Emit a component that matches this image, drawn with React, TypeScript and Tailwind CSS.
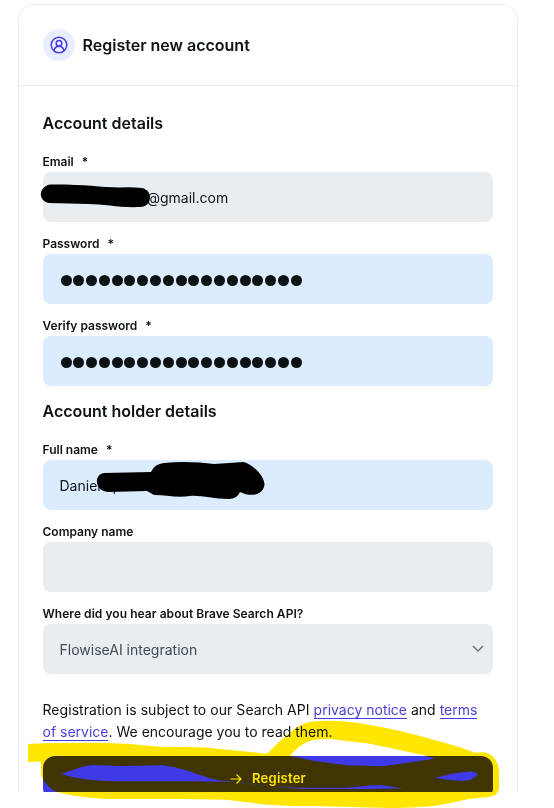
import type { ReactNode } from "react";

function Field({ label, required, tone, children }: { label: ReactNode; required?: boolean; tone: string; children?: ReactNode }) {
  return (
    <div className="mb-3.5 flex flex-col">
      <div className="-ml-px mb-0.5 flex h-4 items-center gap-2 pl-[0.5px] text-[12px] font-semibold leading-4">
        <span>{label}</span>
        {required && <span>*</span>}
      </div>
      <div className={`relative flex h-[50px] items-center rounded-lg pl-[16.5px] text-[14px] ${tone}`}>{children}</div>
    </div>
  );
}

function Dots() {
  return (
    <div className="flex gap-[1.8px] pl-[1px] pt-[2px]">
      {Array.from({ length: 19 }, (_, i) => (
        <span key={i} className="h-[11px] w-[11px] rounded-full bg-[#0d1214]" />
      ))}
    </div>
  );
}

const grey = "bg-[#e9edf0]";
const blue = "bg-[#dbecff]";
const link = "border-b border-[#4039e0] text-[#4a3fd6]";

export default function App() {
  return (
    <div className="relative h-[808px] w-[554px] overflow-hidden bg-white font-['Inter',sans-serif] text-[#0d1214]">
      <div className="h-[792px] overflow-hidden pl-[18px] pt-1">
        <div className="h-[850px] w-[500px] rounded-2xl border border-[#ebecf0]">
          <header className="flex h-[81px] items-center gap-2 border-b border-[#ebecf0] px-6">
            <div className="flex h-8 w-8 items-center justify-center rounded-full bg-[#e8edff]">
              <svg width="18" height="18" viewBox="0 0 18 18" fill="none" stroke="#4339e6" strokeWidth="1.5">
                <circle cx="9" cy="9" r="7.8" />
                <circle cx="9" cy="7.200" r="2.800" />
                <path d="M3.9 14.7C4.700 11.700 6.500 10.300 9 10.300s4.300 1.400 5.100 4.400" />
              </svg>
            </div>
            <h1 className="-ml-[0.5px] text-[16px] font-semibold leading-6">Register new account</h1>
          </header>
          <main className="px-6 pt-[25px]">
            <h2 className="-ml-[0.5px] mb-[19px] text-[16px] font-semibold leading-6">Account details</h2>
            <Field label="Email" required tone={grey}>
              <span className="pl-[87px]">@gmail.com</span>
            </Field>
            <Field label="Password" required tone={blue}><Dots /></Field>
            <Field label="Verify password" required tone={blue}><Dots /></Field>
            <h2 className="-ml-[0.5px] -mt-px mb-[19px] text-[16px] font-semibold leading-6">Account holder details</h2>
            <Field label="Full name" required tone={blue}>
              <span>Daniel</span><span className="pl-3">,</span>
            </Field>
            <Field label="Company name" tone={grey} />
            <Field label={<span className="tracking-[0.05px]">Where did you hear about Brave Search API?</span>} tone={grey}>
              <span className="text-[#3f4c54]">FlowiseAI integration</span>
              <svg className="ml-auto mr-[9px]" width="12" height="8" viewBox="0 0 12 8" fill="none" stroke="#5f727c" strokeWidth="1.4">
                <path d="M1 1l5 5 5-5" />
              </svg>
            </Field>
            <p className="-ml-[0.5px] mt-[25px] whitespace-nowrap text-[14px] leading-[22px]">
              <span className="tracking-[0.05px]">Registration is subject to our Search API </span>
              <a className={link}>privacy notice</a> and <a className={link}>terms</a>
              <br />
              <a className={link}>of service</a>. We encourage you to read them.
            </p>
            <button className="mt-[13px] flex h-11 w-full items-center justify-center gap-2.5 rounded-xl bg-[#4039e8] pt-px text-[13px] font-semibold tracking-[0.25px] text-white">
              <svg width="12" height="12" viewBox="0 0 12 12" fill="none" stroke="currentColor" strokeWidth="1.2">
                <path d="M0.5 6h10.5M6.5 1.5L11 6l-4.500 4.500" />
              </svg>
              Register
            </button>
          </main>
        </div>
      </div>
      {/* Marker strokes drawn over the form */}
      <svg className="pointer-events-none absolute inset-0" width="554" height="808" viewBox="0 0 554 808">
        <path d="M50 184.500C80 184 100 187 120 187.500Q132 187 142 188C153 190 153 207 140 207C120 208 105 204 88 204L49 203C38 201 38 187 50 184.500Z" />
        <path d="M104 473L151 472Q154 464 164 463C181 461 199 462 214 464Q230 463 243 462C251 463 264 475 264.500 484C264 494 253 498 240 492Q237 499 229 499C213 499 201 495 190 496C177 498 166 495 154 495L147 491L108 492C95 491 93 475 104 473Z" />
      </svg>
      <svg className="pointer-events-none absolute inset-0 mix-blend-multiply" width="554" height="808" viewBox="0 0 554 808">
        <path
          fill="#ffe600"
          fillRule="evenodd"
          d="M28 744Q43 742.500 100 742.700Q130 743 160 746.700L180 747Q204 746.500 220 749L267 753.700Q279 741 293 730Q304 722 315 721.200Q340 719.500 370 725Q400 730 437 740.700Q461 747 475 752.700L484 752.300C492 753 499 762 499 771V789Q498 796 488 797L469 799Q452 803 437 805.500Q410 809 370 807.500L313 806Q275 806 253 803L227 799.700L180 799H105Q73 797 54 791Q42 782 41 774V761.500L28 762Z
          M60.700 774L82 767Q88 765 96 765L120 766L163 765.300Q181 768 200 775Q216 781 232 781.500L247 783.300Q267 787 297 787.700H347L370 785.500L381 785L403 788.500L364 789H305Q270 787 240 782L190 781.300H118Q90 781 72 777Z
          M290 755.700Q298 746 307 742Q314 738.500 330 739L370 743.700L424 755.300L434.700 758.700L404 763.300L382 766.300L347 765.300L313 760.700Z
          M435.300 777.700L454 773.300L472 771.300L478 774L475 777L470 780L462 781L447 779.700Z"
        />
      </svg>
    </div>
  );
}
